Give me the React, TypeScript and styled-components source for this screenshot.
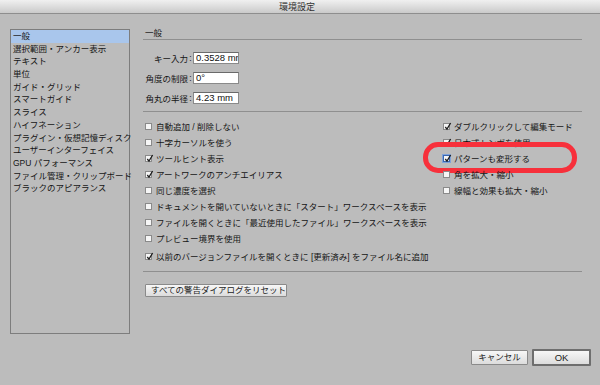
import React from 'react';
import styled, { createGlobalStyle, css } from 'styled-components';

const GlobalStyle = createGlobalStyle`
  html, body {
    margin: 0;
    padding: 0;
    background: #bcbcbc;
  }
  body {
    font-family: "Liberation Sans", "Noto Sans CJK JP", sans-serif;
    font-size: 8.5px;
    color: #151515;
  }
`;

const Window = styled.div`
  width: 600px;
  height: 385px;
  background: #bcbcbc;
  display: flex;
  flex-direction: column;
  overflow: hidden;
`;

const TitleBar = styled.div`
  height: 14px;
  box-sizing: border-box;
  border-bottom: 1px solid #8e8e8e;
  background: linear-gradient(#f0f0f0, #cacaca);
  display: flex;
  align-items: center;
  justify-content: center;
  font-size: 9px;
  color: #333;
  padding-right: 6px;
`;

const Body = styled.div`
  display: flex;
  gap: 13px;
  padding: 15px 18px 0 10px;
`;

const Sidebar = styled.ul`
  width: 120px;
  height: 305px;
  box-sizing: border-box;
  margin: 0;
  padding: 0;
  list-style: none;
  border: 1px solid #7d7d7d;
`;

const SidebarItem = styled.li<{ $active?: boolean }>`
  height: 12.7px;
  line-height: 12.7px;
  padding-left: 2px;
  white-space: nowrap;
  ${p =>
    p.$active &&
    css`
      background: #a9c6ec;
    `}
`;

const Panel = styled.div`
  flex: 1;
  display: flex;
  flex-direction: column;
`;

const SectionTitle = styled.div`
  height: 10px;
  line-height: 9px;
  padding-left: 2px;
`;

const Rule = styled.div`
  border-top: 1px solid #8f8f8f;
`;

const Fields = styled.div`
  display: grid;
  grid-template-columns: 43px 5px 46px;
  grid-auto-rows: 12px;
  row-gap: 8px;
  align-items: center;
  padding: 12px 0 7px 2px;
`;

const FieldLabel = styled.span`
  text-align: right;
  white-space: nowrap;
`;

const Colon = styled.span`
  text-align: center;
`;

const TextField = styled.div`
  height: 12px;
  box-sizing: border-box;
  background: #fff;
  border: 1px solid #8a8a8a;
  border-top-color: #6a6a6a;
  font-size: 9.5px;
  line-height: 10px;
  padding-left: 2px;
  white-space: nowrap;
  overflow: hidden;
  color: #111;
`;

const Checks = styled.div`
  display: grid;
  grid-template-columns: 298px 1fr;
  padding: 6px 0 7px 2px;
`;

const CheckColumn = styled.div`
  display: flex;
  flex-direction: column;
`;

const CheckRow = styled.div<{ $spaced?: boolean }>`
  position: relative;
  display: flex;
  align-items: center;
  gap: 4px;
  height: 16px;
  white-space: nowrap;
  ${p =>
    p.$spaced &&
    css`
      margin-top: 2px;
    `}
`;

const Box = styled.span<{ $focused?: boolean }>`
  position: relative;
  width: 7px;
  height: 7px;
  flex: none;
  box-sizing: border-box;
  background: #f6f6f6;
  border: 1px solid #8a8a8a;
  ${p =>
    p.$focused &&
    css`
      border-color: #3a67b0;
      box-shadow: 0 0 0 1px #7fa3da;
    `}
  svg {
    position: absolute;
    left: 0;
    top: -2px;
  }
`;

const Oval = styled.span`
  position: absolute;
  left: -20px;
  top: -8px;
  width: 154px;
  height: 31px;
  box-sizing: border-box;
  border: 5px solid #f7303b;
  border-radius: 15px;
  pointer-events: none;
`;

const ButtonRow = styled.div`
  padding: 12px 0 0 2px;
`;

const Button = styled.button<{ $default?: boolean; $w?: number }>`
  font: inherit;
  color: #1c1c1c;
  height: 13px;
  padding: 0 5px;
  box-sizing: border-box;
  border: 1px solid #8a8a8a;
  border-radius: 1px;
  background: linear-gradient(#f7f7f7, #dcdcdc);
  line-height: 11px;
  white-space: nowrap;
  cursor: default;
  ${p =>
    p.$w &&
    css`
      width: ${p.$w}px;
    `}
  ${p =>
    p.$default &&
    css`
      border: 2px solid #6e6e6e;
      font-size: 9.5px;
    `}
`;

const Footer = styled.div`
  display: flex;
  justify-content: flex-end;
  align-items: center;
  gap: 4px;
  padding: 15px 9px 0 0;
`;

const Check = ({ checked, focused }: { checked?: boolean; focused?: boolean }) => (
  <Box $focused={focused}>
    {checked && (
      <svg width="8" height="9" viewBox="0 0 8 9">
        <path d="M1.3 5 L3 7.2 L6.6 1" fill="none" stroke="#1e1e1e" strokeWidth="1.3" />
      </svg>
    )}
  </Box>
);

const categories = [
  '一般',
  '選択範囲・アンカー表示',
  'テキスト',
  '単位',
  'ガイド・グリッド',
  'スマートガイド',
  'スライス',
  'ハイフネーション',
  'プラグイン・仮想記憶ディスク',
  'ユーザーインターフェイス',
  'GPU パフォーマンス',
  'ファイル管理・クリップボード',
  'ブラックのアピアランス',
];

const fields = [
  { label: 'キー入力', value: '0.3528 mm' },
  { label: '角度の制限', value: '0°' },
  { label: '角丸の半径', value: '4.23 mm' },
];

const leftChecks = [
  { label: '自動追加 / 削除しない', checked: false },
  { label: '十字カーソルを使う', checked: false },
  { label: 'ツールヒント表示', checked: true },
  { label: 'アートワークのアンチエイリアス', checked: true },
  { label: '同じ濃度を選択', checked: false },
  { label: 'ドキュメントを開いていないときに「スタート」ワークスペースを表示', checked: false },
  { label: 'ファイルを開くときに「最近使用したファイル」ワークスペースを表示', checked: false },
  { label: 'プレビュー境界を使用', checked: false },
];

const rightChecks = [
  { label: 'ダブルクリックして編集モード', checked: true },
  { label: '日本式トンボを使用', checked: true },
  { label: 'パターンも変形する', checked: true, focused: true },
  { label: '角を拡大・縮小', checked: false },
  { label: '線幅と効果も拡大・縮小', checked: false },
];

export default function App() {
  return (
    <>
      <GlobalStyle />
      <Window>
        <TitleBar>環境設定</TitleBar>
        <Body>
          <Sidebar>
            {categories.map((c, i) => (
              <SidebarItem key={c} $active={i === 0}>
                {c}
              </SidebarItem>
            ))}
          </Sidebar>
          <Panel>
            <SectionTitle>一般</SectionTitle>
            <Rule />
            <Fields>
              {fields.map(f => (
                <React.Fragment key={f.label}>
                  <FieldLabel>{f.label}</FieldLabel>
                  <Colon>:</Colon>
                  <TextField>{f.value}</TextField>
                </React.Fragment>
              ))}
            </Fields>
            <Rule />
            <Checks>
              <CheckColumn>
                {leftChecks.map(c => (
                  <CheckRow key={c.label}>
                    <Check checked={c.checked} />
                    {c.label}
                  </CheckRow>
                ))}
                <CheckRow $spaced>
                  <Check checked />
                  以前のバージョンファイルを開くときに [更新済み] をファイル名に追加
                </CheckRow>
              </CheckColumn>
              <CheckColumn>
                {rightChecks.map(c => (
                  <CheckRow key={c.label}>
                    <Check checked={c.checked} focused={c.focused} />
                    {c.label}
                    {c.focused && <Oval />}
                  </CheckRow>
                ))}
              </CheckColumn>
            </Checks>
            <Rule />
            <ButtonRow>
              <Button $w={142}>すべての警告ダイアログをリセット</Button>
            </ButtonRow>
          </Panel>
        </Body>
        <Footer>
          <Button $w={57} style={{ height: 15 }}>キャンセル</Button>
          <Button $w={59} $default style={{ height: 17 }}>OK</Button>
        </Footer>
      </Window>
    </>
  );
}
